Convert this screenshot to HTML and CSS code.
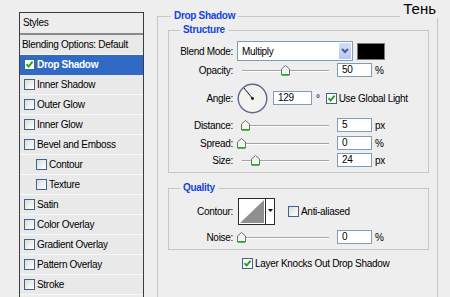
FILE: index.html
```html
<!DOCTYPE html>
<html>
<head>
<meta charset="utf-8">
<link rel="stylesheet" href="styles.css">
</head>
<body>
<div class="dialog">
  <div class="styles-col">
    <div class="panel">
      <div class="panel-head">Styles</div>
      <div class="item blend">Blending Options: Default</div>
      <div class="item sel"><span class="cb on"><svg viewBox="0 0 9 9" width="9" height="9"><polyline points="1.5,4.2 3.6,6.6 7.6,1.6" fill="none" stroke="#1fa31f" stroke-width="1.9"/></svg></span>Drop Shadow</div>
      <div class="item"><span class="cb"></span>Inner Shadow</div>
      <div class="item"><span class="cb"></span>Outer Glow</div>
      <div class="item"><span class="cb"></span>Inner Glow</div>
      <div class="item"><span class="cb"></span>Bevel and Emboss</div>
      <div class="item sub"><span class="cb"></span>Contour</div>
      <div class="item sub"><span class="cb"></span>Texture</div>
      <div class="item"><span class="cb"></span>Satin</div>
      <div class="item"><span class="cb"></span>Color Overlay</div>
      <div class="item"><span class="cb"></span>Gradient Overlay</div>
      <div class="item"><span class="cb"></span>Pattern Overlay</div>
      <div class="item"><span class="cb"></span>Stroke</div>
    </div>
  </div>

  <div class="main">
    <div class="group outer">
      <div class="gtitle outer-title">Drop Shadow</div>

      <div class="group structure">
        <div class="gtitle inner-title">Structure</div>

        <div class="row h20">
          <span class="lbl">Blend Mode:</span>
          <div class="select">
            <span class="sel-text">Multiply</span>
            <span class="sel-btn"><svg viewBox="0 0 14 18" width="14" height="18"><polyline points="4,7 7,10 10,7" fill="none" stroke="#4a5f8a" stroke-width="2"/></svg></span>
          </div>
          <div class="swatch"></div>
        </div>

        <div class="row h14 mt2">
          <span class="lbl">Opacity:</span>
          <div class="slider"><div class="track"></div><span class="thumb" style="left:44px"><svg viewBox="0 0 9 11" width="9" height="11"><polygon points="0.5,4 4.5,0.5 8.5,4 8.5,10 0.5,10" fill="#f4f4f0" stroke="#6e6e6e"/><line x1="1" y1="9.8" x2="8" y2="9.8" stroke="#21b021" stroke-width="1.6"/></svg></span></div>
          <div class="field w35">50</div><span class="unit">%</span>
        </div>

        <div class="row h30 mt6">
          <span class="lbl">Angle:</span>
          <svg class="dial" viewBox="0 0 31 31" width="31" height="31">
            <circle cx="15.5" cy="15.5" r="14.3" fill="#f2f2ee" stroke="#5b6b8e" stroke-width="1.4"/>
            <line x1="15.5" y1="15.5" x2="7" y2="5" stroke="#111" stroke-width="1"/>
            <circle cx="15.5" cy="15.5" r="1.4" fill="#111"/>
          </svg>
          <div class="field w39">129</div><span class="deg">°</span>
          <span class="cb on gl"><svg viewBox="0 0 9 9" width="9" height="9"><polyline points="1.5,4.2 3.6,6.6 7.6,1.6" fill="none" stroke="#1fa31f" stroke-width="1.9"/></svg></span><span class="cbtext">Use Global Light</span>
        </div>

        <div class="row h14 mt5">
          <span class="lbl">Distance:</span>
          <div class="slider"><div class="track"></div><span class="thumb" style="left:4px"><svg viewBox="0 0 9 11" width="9" height="11"><polygon points="0.5,4 4.5,0.5 8.5,4 8.5,10 0.5,10" fill="#f4f4f0" stroke="#6e6e6e"/><line x1="1" y1="9.8" x2="8" y2="9.8" stroke="#21b021" stroke-width="1.6"/></svg></span></div>
          <div class="field w35">5</div><span class="unit">px</span>
        </div>

        <div class="row h14 mt4">
          <span class="lbl">Spread:</span>
          <div class="slider"><div class="track"></div><span class="thumb" style="left:0px"><svg viewBox="0 0 9 11" width="9" height="11"><polygon points="0.5,4 4.5,0.5 8.5,4 8.5,10 0.5,10" fill="#f4f4f0" stroke="#6e6e6e"/><line x1="1" y1="9.8" x2="8" y2="9.8" stroke="#21b021" stroke-width="1.6"/></svg></span></div>
          <div class="field w35">0</div><span class="unit">%</span>
        </div>

        <div class="row h14 mt3">
          <span class="lbl">Size:</span>
          <div class="slider"><div class="track"></div><span class="thumb" style="left:14px"><svg viewBox="0 0 9 11" width="9" height="11"><polygon points="0.5,4 4.5,0.5 8.5,4 8.5,10 0.5,10" fill="#f4f4f0" stroke="#6e6e6e"/><line x1="1" y1="9.8" x2="8" y2="9.8" stroke="#21b021" stroke-width="1.6"/></svg></span></div>
          <div class="field w35">24</div><span class="unit">px</span>
        </div>
      </div>

      <div class="group quality">
        <div class="gtitle inner-title">Quality</div>

        <div class="row h27">
          <span class="lbl">Contour:</span>
          <svg class="contour" viewBox="0 0 37 27" width="37" height="27">
            <rect x="0.5" y="0.5" width="36" height="26" fill="#fff" stroke="#2a2a2a"/>
            <polygon points="2,25 26,2 26,25" fill="#8f8f8f"/>
            <line x1="27.5" y1="1" x2="27.5" y2="26" stroke="#2a2a2a"/>
            <polygon points="30,11 35,11 32.5,14" fill="#111"/>
          </svg>
          <span class="cb aa"></span><span class="cbtext">Anti-aliased</span>
        </div>

        <div class="row h14 mt5">
          <span class="lbl">Noise:</span>
          <div class="slider"><div class="track"></div><span class="thumb" style="left:0px"><svg viewBox="0 0 9 11" width="9" height="11"><polygon points="0.5,4 4.5,0.5 8.5,4 8.5,10 0.5,10" fill="#f4f4f0" stroke="#6e6e6e"/><line x1="1" y1="9.8" x2="8" y2="9.8" stroke="#21b021" stroke-width="1.6"/></svg></span></div>
          <div class="field w35">0</div><span class="unit">%</span>
        </div>
      </div>

      <div class="knock">
        <span class="cb on"><svg viewBox="0 0 9 9" width="9" height="9"><polyline points="1.5,4.2 3.6,6.6 7.6,1.6" fill="none" stroke="#1fa31f" stroke-width="1.9"/></svg></span><span class="cbtext">Layer Knocks Out Drop Shadow</span>
      </div>
    </div>
  </div>

  <div class="title-ru">Тень</div>
</div>
</body>
</html>
```

FILE: styles.css
```css
* { box-sizing: border-box; }

html, body {
  margin: 0;
  padding: 0;
}

body {
  font-family: "Liberation Sans", Arial, sans-serif;
  font-size: 10px;
  letter-spacing: -0.3px;
  color: #000;
  background: #eeeeee;
}

.dialog {
  position: relative;
  display: flex;
  width: 450px;
  height: 297px;
  overflow: hidden;
  background: #eeeeee;
}

/* ---------- left styles list ---------- */
.styles-col {
  flex: 0 0 144px;
  padding: 12px 0 0 19px;
}

.panel {
  width: 125px;
  height: 300px;
  border: 1px solid #3c3c3c;
  border-bottom: none;
  background: #ebebeb;
}

.panel-head {
  height: 22px;
  line-height: 20px;
  padding-left: 3px;
  border-bottom: 2px solid #8a8a8a;
  background: #ededed;
}

.item {
  display: flex;
  align-items: center;
  height: 20px;
  padding-left: 4px;
  border-bottom: 1px solid #f8f8f8;
  background: #e9e9e9;
  white-space: nowrap;
}

.item.blend { padding-left: 2px; }
.item.sub { padding-left: 16px; }

.item.sel {
  background: #316ac5;
  color: #fff;
  font-weight: bold;
  border-bottom-color: #316ac5;
}

.cb {
  display: inline-flex;
  flex: 0 0 auto;
  width: 11px;
  height: 11px;
  margin-right: 2px;
  border: 1px solid #3e6490;
  background: linear-gradient(135deg, #dcdcd6, #ffffff);
}

.cb.on { background: #fff; }
.cb svg { display: block; margin: 0; }

/* ---------- right side ---------- */
.main {
  flex: 0 0 auto;
  padding: 16px 0 0 13px;
}

.group {
  position: relative;
  border: 1px solid #c6c6c2;
}

.outer {
  width: 281px;
  height: 300px;
  padding: 13px 8px 0 10px;
}

.gtitle {
  position: absolute;
  top: -7px;
  padding: 0 3px;
  line-height: 12px;
  background: #eeeeee;
  color: #1444dc;
  font-weight: bold;
}

.outer-title { left: 13px; }
.inner-title { left: 11px; }

.structure {
  padding: 10px 0 5px 0;
}

.quality {
  margin-top: 15px;
  padding: 9px 0 5px 0;
}

.row {
  display: flex;
  align-items: center;
  white-space: nowrap;
}

.h14 { height: 14px; }
.h20 { height: 20px; }
.h27 { height: 27px; }
.h30 { height: 30px; }
.mt2 { margin-top: 2px; }
.mt3 { margin-top: 3px; }
.mt4 { margin-top: 4px; }
.mt5 { margin-top: 5px; }
.mt6 { margin-top: 6px; }

.lbl {
  flex: 0 0 64px;
  margin-right: 4px;
  text-align: right;
}

.select {
  display: flex;
  align-items: center;
  width: 116px;
  height: 20px;
  border: 1px solid #7f9db9;
  background: #fff;
}

.sel-text {
  flex: 1;
  padding-left: 4px;
}

.sel-btn {
  display: block;
  width: 14px;
  height: 18px;
  margin-right: 0;
  border: 1px solid #fff;
  background: linear-gradient(#d3def8, #b7c9f2);
}

.sel-btn svg { display: block; margin: -1px 0 0 -1px; }

.swatch {
  width: 28px;
  height: 17px;
  margin-left: 4px;
  border: 1px solid #7a7a7a;
  background: #000;
}

.slider {
  position: relative;
  width: 96px;
  height: 14px;
  margin-right: 4px;
}

.track {
  position: absolute;
  left: 5px;
  right: 4px;
  top: 7px;
  height: 2px;
  border-top: 1px solid #a4a4a0;
  border-bottom: 1px solid #ffffff;
}

.thumb {
  position: absolute;
  top: 2px;
  width: 9px;
  height: 11px;
}

.thumb svg { display: block; }

.field {
  height: 14px;
  line-height: 12px;
  padding-left: 4px;
  border: 1px solid #7f9db9;
  background: #fff;
}

.w35 { width: 35px; }
.w39 { width: 39px; }

.unit { margin-left: 3px; }

.dial {
  display: block;
  margin-right: 5px;
}

.deg { margin-left: 4px; }

.cb.gl { margin-left: 6px; }
.cb.aa { margin-left: 13px; }

.contour { display: block; margin-left: 1px; }

.knock {
  display: flex;
  align-items: center;
  margin-top: 8px;
  padding-left: 74px;
  height: 11px;
  white-space: nowrap;
}

.title-ru {
  position: absolute;
  top: 0;
  right: 11px;
  padding: 0 3px;
  font-size: 15px;
  line-height: 18px;
  letter-spacing: 0;
  background: #eeeeee;
}
```
